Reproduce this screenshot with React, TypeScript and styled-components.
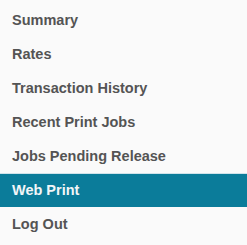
import React from "react";
import styled, { createGlobalStyle } from "styled-components";

const Global = createGlobalStyle`
  html, body { margin: 0; padding: 0; background: #fafafa; }
  body { font-family: "Liberation Sans", Arial, sans-serif; }
`;

const Nav = styled.nav`
  width: 247px;
  height: 245px;
  background: #fafafa;
  padding-top: 3px;
  box-sizing: border-box;
`;

const List = styled.ul`
  list-style: none;
  margin: 0;
  padding: 0;
`;

const Item = styled.li<{ $active?: boolean }>`
  height: 34px;
  box-sizing: border-box;
  display: flex;
  align-items: center;
  padding: 0 0 2px 12px;
  font-size: 14.5px;
  font-weight: 700;
  color: ${(p) => (p.$active ? "#f2f6f8" : "#545454")};
  background: ${(p) => (p.$active ? "#0b7c9a" : "transparent")};
  border-top: 1px solid ${(p) => (p.$active ? "#cfe3ea" : "transparent")};
  cursor: pointer;
`;

const items = [
  "Summary",
  "Rates",
  "Transaction History",
  "Recent Print Jobs",
  "Jobs Pending Release",
  "Web Print",
  "Log Out",
];

export default function App() {
  return (
    <>
      <Global />
      <Nav>
        <List>
          {items.map((t) => (
            <Item key={t} $active={t === "Web Print"}>
              {t}
            </Item>
          ))}
        </List>
      </Nav>
    </>
  );
}
